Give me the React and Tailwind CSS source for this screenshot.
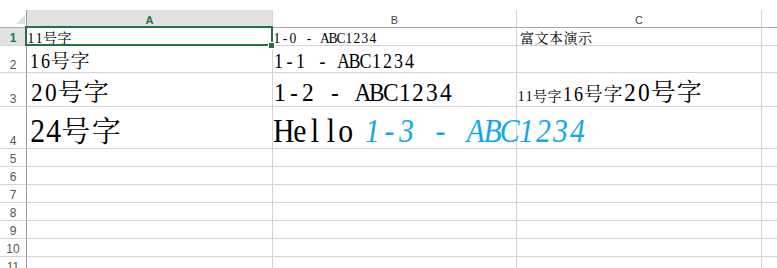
import React from "react";

const SIZE = {
  11: { lat: "text-[15px]", w: "w-[8px]", cjk: "text-[14px] tracking-[0.5px]" },
  16: { lat: "text-[20px]", w: "w-[10.9px]", cjk: "text-[19px] tracking-[0.6px]" },
  20: { lat: "text-[26px]", w: "w-[13.85px]", cjk: "text-[25px] tracking-[1px]" },
  24: { lat: "text-[33px]", w: "w-[15.6px]", cjk: "text-[29px] tracking-[1.5px]" },
};

const FONT = "font-['Liberation_Serif','Noto_Serif_CJK_SC','Noto_Sans_CJK_SC',serif]";
const isCJK = (c) => /[\u4e00-\u9fff]/.test(c);

function Rich({ size, text, italic = false }) {
  const s = SIZE[size];
  const runs = text.split(/([\u4e00-\u9fff]+)/).filter((p) => p.length);
  return (
    <span className={italic ? "ml-[10px] italic text-[#0fa9ea]" : ""}>
      {runs.map((run, i) =>
        isCJK(run) ? (
          <span key={i} className={s.cjk}>
            {run}
          </span>
        ) : (
          run.split("").map((ch, j) => (
            <span
              key={i + "-" + j}
              className={`inline-flex justify-center ${s.lat} ${italic ? "w-[17.1px]" : s.w} scale-x-[0.9]`}
            >
              {ch === " " ? "\u00a0" : ch}
            </span>
          ))
        )
      )}
    </span>
  );
}

const rowHeights = [18, 27, 34, 42, 18, 18, 18, 18, 18, 18, 18];

function Cell({ children, pad = "", mb = "", last = false }) {
  return (
    <div
      className={`flex items-end overflow-visible whitespace-nowrap border-b border-[#d4d4d4] ${
        last ? "" : "border-r"
      } ${pad} ${FONT} text-black`}
    >
      <div className={`text-[0px] leading-none ${mb}`}>{children}</div>
    </div>
  );
}

export default function App() {
  const mbs = ["mb-[-1px]", "mb-[1px]", "mb-0", "mb-0"];
  const content = [
    [
      <Rich size={11} text="11号字" />,
      <Rich size={11} text="1-0 - ABC1234" />,
      <Rich size={11} text="富文本演示" />,
    ],
    [<Rich size={16} text="16号字" />, <Rich size={16} text="1-1 - ABC1234" />, null],
    [
      <Rich size={20} text="20号字" />,
      <Rich size={20} text="1-2 - ABC1234" />,
      <>
        <Rich size={11} text="11号字" />
        <Rich size={16} text="16号字" />
        <Rich size={20} text="20号字" />
      </>,
    ],
    [
      <Rich size={24} text="24号字" />,
      <>
        <Rich size={24} text="Hello" />
        <Rich size={24} text="1-3 - ABC1234" italic />
      </>,
      null,
    ],
  ];
  const padA = ["pl-0", "pl-[2px]", "pl-[3px]", "pl-[3px]"];
  const padB = ["pl-0", "pl-0", "pl-0", "pl-[3px]"];
  const padC = ["pl-[3px]", "pl-0", "pl-0", "pl-0"];

  return (
    <div className="relative h-[268px] w-[777px] overflow-hidden bg-white pt-[10px]">
      <div className="grid grid-cols-[27px_246px_244px_245px_1fr] grid-rows-[18px_18px_27px_34px_42px_18px_18px_18px_18px_18px_18px_18px]">
        {/* header row */}
        <div className="relative border-b border-r border-b-[#ababab] border-r-[#9b9b9b] bg-white">
          <svg className="absolute left-[16px] top-[5px]" width="9" height="9" viewBox="0 0 9 9">
            <polygon points="9,0 9,9 0,9" fill="#dfdfdf" />
          </svg>
        </div>
        {["A", "B", "C", ""].map((l, i) => (
          <div
            key={i}
            className={`flex items-end justify-center border-b border-b-[#ababab] pb-[1px] font-['Liberation_Sans',Arial,sans-serif] text-[11px] leading-none ${
              i < 3 ? "border-r border-r-[#d4d4d4]" : ""
            } ${i === 0 ? "bg-[#e1e1e1] font-bold text-[#217346]" : "bg-white text-[#444]"}`}
          >
            {l}
          </div>
        ))}
        {rowHeights.map((h, r) => (
          <React.Fragment key={r}>
            <div
              className={`flex items-end justify-center border-b border-r border-b-[#d4d4d4] border-r-[#9b9b9b] pb-[1px] font-['Liberation_Sans',Arial,sans-serif] text-[12px] leading-none ${
                r === 0 ? "bg-[#e1e1e1] font-bold text-[#217346]" : "bg-white text-[#555]"
              }`}
            >
              {r + 1}
            </div>
            <Cell pad={padA[r] || ""} mb={mbs[r] || ""}>
              {content[r] ? content[r][0] : null}
            </Cell>
            <Cell pad={padB[r] || ""} mb={mbs[r] || ""}>
              {content[r] ? content[r][1] : null}
            </Cell>
            <Cell pad={padC[r] || ""} mb={mbs[r] || ""}>
              {content[r] ? content[r][2] : null}
            </Cell>
            <Cell last />
          </React.Fragment>
        ))}
      </div>
      {/* selection */}
      <div className="absolute left-[25px] top-[26px] h-[20px] w-[248px] border-2 border-[#217346]" />
      <div className="absolute left-[268px] top-[42px] h-[7px] w-[7px] border border-white bg-[#217346]" />
    </div>
  );
}
